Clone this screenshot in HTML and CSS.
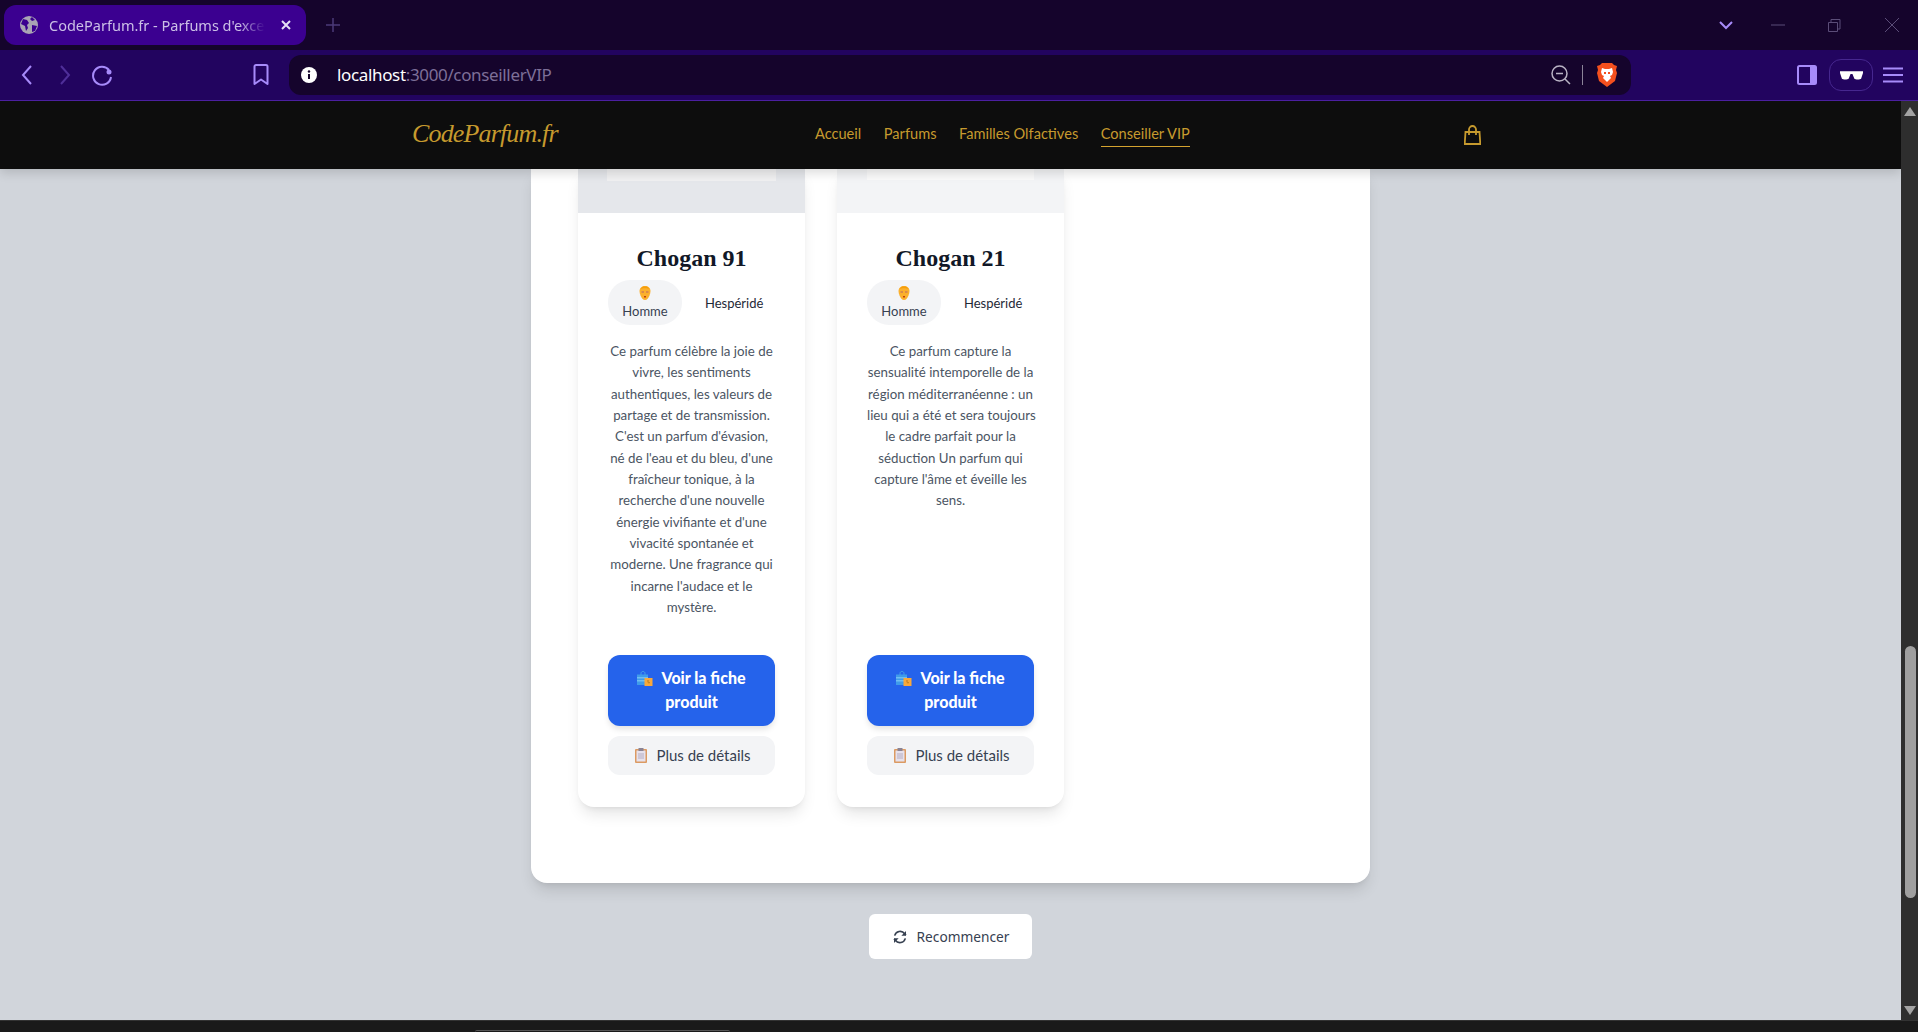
FILE: index.html
```html
<!DOCTYPE html>
<html lang="fr">
<head>
<meta charset="utf-8">
<title>CodeParfum.fr - Parfums d'exception</title>
<link rel="stylesheet" href="styles.css">
</head>
<body>
<svg class="defs" width="0" height="0" aria-hidden="true">
  <symbol id="e-face" viewBox="0 0 12 14">
    <path d="M.5 5c0-3 2.500-5 5.500-5s5.500 2 5.500 5c0 1.500-.5 3-1 4.500C9.500 12 8 14 6 14s-3.500-2-4.500-4.500C1 8 .5 6.500.5 5z" fill="#fbb02d"/>
    <path d="M1.500 3C2.500 1 4 .5 6 .5S9.500 1 10.500 3C9 2 3 2 1.500 3z" fill="#f59e0b"/>
    <rect x="2.500" y="5" width="2.500" height="2" fill="#d98a4a"/><rect x="7" y="5" width="2.500" height="2" fill="#d98a4a"/>
    <rect x="5" y="10" width="2" height="1.500" fill="#c2410c"/>
  </symbol>
  <symbol id="e-bags" viewBox="0 0 16 15">
    <path d="M4 4V2.500C4 1 5 .5 6 .5S8 1 8 2.500V4" fill="none" stroke="#4aa3e8"/>
    <rect x="0" y="3.500" width="11" height="10.500" fill="#3f9bea"/>
    <rect x="0" y="6" width="11" height="1.500" fill="#6fbdf2"/><rect x="0" y="9" width="11" height="1.500" fill="#6fbdf2"/>
    <rect x="7.500" y="7" width="8" height="8" fill="#f9a83a"/>
    <path d="M11 9v2c0 1 1 1 2 .5" fill="none" stroke="#b9791e"/>
  </symbol>
  <symbol id="e-clip" viewBox="0 0 12 15">
    <rect x="0" y="1" width="12" height="14" rx="1" fill="#dc9a62"/>
    <rect x="1.500" y="2.500" width="9" height="11" fill="#e6e1ec"/>
    <rect x="3.500" y="0" width="5" height="3" fill="#8b8494"/>
    <path d="M3 6h6M3 8h6M3 10h6" stroke="#b5adc2"/>
  </symbol>
</svg>
<div class="browser">
  <div class="tabstrip">
    <div class="tab">
      <svg class="tab-fav" viewBox="0 0 18 18"><circle cx="9" cy="9" r="9" fill="#a9a4b4"/><path d="M3 3l4 1 2 3-2 2 1 3-2 3-1-5-4-2zM12 1l3 3-3 1-2-2zM12 9l5 1-2 5-3 1z" fill="#3b0090"/></svg>
      <span class="tab-title">CodeParfum.fr - Parfums d'exception</span>
      <svg class="tab-close" viewBox="0 0 12 12"><path d="M2 2l8 8M10 2l-8 8" stroke="#e6def5" stroke-width="2"/></svg>
    </div>
    <svg class="tab-new" viewBox="0 0 14 14"><path d="M7 0v14M0 7h14" stroke="#4b3a78" stroke-width="1.500"/></svg>
    <svg class="tab-list" viewBox="0 0 14 10"><path d="M1 2l6 6 6-6" fill="none" stroke="#a78bfa" stroke-width="2"/></svg>
    <svg class="win win-min" viewBox="0 0 14 14"><path d="M0 7h14" stroke="#5b4d78"/></svg>
    <svg class="win" viewBox="0 0 14 14"><path d="M1.500 4.500h9v9h-9zM4 4V1.500h9V11h-2" fill="none" stroke="#5b4d78"/></svg>
    <svg class="win" viewBox="0 0 14 14"><path d="M0 0l14 14M14 0L0 14" stroke="#5b4d78"/></svg>
  </div>
  <div class="toolbar">
    <svg class="tool tool-back" viewBox="0 0 12 20"><path d="M10 1L2 10l8 9" fill="none" stroke="#a78bfa" stroke-width="2"/></svg>
    <svg class="tool tool-fwd" viewBox="0 0 12 20"><path d="M2 1l8 9-8 9" fill="none" stroke="#4f2f99" stroke-width="2"/></svg>
    <svg class="tool-reload" viewBox="0 0 22 22"><path d="M18 6A9 9 0 1 0 20 13" fill="none" stroke="#a78bfa" stroke-width="2"/><circle cx="18" cy="8" r="2.500" fill="#a78bfa"/></svg>
    <svg class="tool-mark" viewBox="0 0 16 22"><path d="M1.500 2.500a1.500 1.500 0 0 1 1.500-1.500h10a1.500 1.500 0 0 1 1.500 1.500V20L8 15.500 1.500 20z" fill="none" stroke="#a78bfa" stroke-width="2" stroke-linejoin="round"/></svg>
    <div class="omnibox">
      <svg class="info" viewBox="0 0 16 16"><circle cx="8" cy="8" r="8" fill="#fff"/><path d="M8 7v5" stroke="#15042c" stroke-width="2"/><circle cx="8" cy="4.500" r="1.200" fill="#15042c"/></svg>
      <span class="url"><span class="url-host">localhost</span>:3000/conseillerVIP</span>
      <svg class="zoom-ic" viewBox="0 0 20 20"><circle cx="8.500" cy="8.500" r="7.500" fill="none" stroke="#b9b3c4" stroke-width="1.500"/><path d="M5 8.500h7" stroke="#b9b3c4" stroke-width="1.500"/><path d="M14 14l5 5" stroke="#b9b3c4" stroke-width="1.500"/></svg>
      <span class="omni-sep"></span>
      <svg class="brave" viewBox="0 0 20 24"><path d="M5 0h10l2 2 3 1-1 4 1 3-2 8-8 6-8-6-2-8 1-3-1-4 3-1z" fill="#f4501e"/><path d="M5 5l3 1h4l3-1 1 4-1 3-2 1 1 2-4 4-4-4 1-2-2-1-1-3z" fill="#fff"/><path d="M7 9h2v2H7zM11 9h2v2h-2z" fill="#f4501e"/></svg>
    </div>
    <svg class="side-ic" viewBox="0 0 20 20"><rect x="1" y="1" width="18" height="18" rx="1.500" fill="none" stroke="#a78bfa" stroke-width="2"/><rect x="13" y="1" width="6" height="18" fill="#a78bfa"/></svg>
    <div class="shades"><svg viewBox="0 0 24 10"><path d="M0 1h24v2l-2 6c-1 1-6 1-7 0l-2-5h-2L9 9c-1 1-6 1-7 0L0 3z" fill="#fff"/></svg></div>
    <svg class="menu-ic" viewBox="0 0 20 16"><path d="M0 1.500h20M0 8h20M0 14.500h20" stroke="#a78bfa" stroke-width="2"/></svg>
  </div>
  <div class="viewport">
    <div class="page">
      <header class="site-nav">
        <div class="site-nav-inner">
          <a class="logo">CodeParfum.fr</a>
          <nav class="links">
            <a class="link">Accueil</a>
            <a class="link">Parfums</a>
            <a class="link">Familles Olfactives</a>
            <a class="link link-active">Conseiller VIP</a>
          </nav>
          <svg class="bag" viewBox="0 0 17 20"><path d="M1.500 7h14l.8 12H.700z" fill="none" stroke="#c69a2e" stroke-width="1.800"/><path d="M5 10V4.500a3.500 3.500 0 0 1 7 0V10" fill="none" stroke="#c69a2e" stroke-width="1.800"/></svg>
        </div>
      </header>
      <main class="content">
        <section class="panel">
          <div class="cards">
            <article class="card">
              <div class="card-img card-img-a"><div class="card-img-inner card-img-inner-a"></div></div>
              <div class="card-body">
                <h3 class="card-title">Chogan 91</h3>
                <div class="tags">
                  <span class="pill"><svg class="e-face"><use href="#e-face"/></svg>Homme</span>
                  <span class="family">Hespéridé</span>
                </div>
                <p class="desc">Ce parfum célèbre la joie de<br>vivre, les sentiments<br>authentiques, les valeurs de<br>partage et de transmission.<br>C'est un parfum d'évasion,<br>né de l'eau et du bleu, d'une<br>fraîcheur tonique, à la<br>recherche d'une nouvelle<br>énergie vivifiante et d'une<br>vivacité spontanée et<br>moderne. Une fragrance qui<br>incarne l'audace et le<br>mystère.</p>
                <a class="btn-primary"><svg class="e-bags"><use href="#e-bags"/></svg>Voir la fiche<br>produit</a>
                <a class="btn-soft"><svg class="e-clip"><use href="#e-clip"/></svg>Plus de détails</a>
              </div>
            </article>
            <article class="card">
              <div class="card-img card-img-b"><div class="card-img-inner card-img-inner-b"></div></div>
              <div class="card-body">
                <h3 class="card-title">Chogan 21</h3>
                <div class="tags">
                  <span class="pill"><svg class="e-face"><use href="#e-face"/></svg>Homme</span>
                  <span class="family">Hespéridé</span>
                </div>
                <p class="desc">Ce parfum capture la<br>sensualité intemporelle de la<br>région méditerranéenne : un<br>lieu qui a été et sera toujours<br>le cadre parfait pour la<br>séduction Un parfum qui<br>capture l'âme et éveille les<br>sens.</p>
                <a class="btn-primary"><svg class="e-bags"><use href="#e-bags"/></svg>Voir la fiche<br>produit</a>
                <a class="btn-soft"><svg class="e-clip"><use href="#e-clip"/></svg>Plus de détails</a>
              </div>
            </article>
          </div>
        </section>
        <a class="restart">
          <svg class="restart-ic" viewBox="0 0 24 24"><path d="M4 10a8.500 8.500 0 0 1 15-3l2 2M20 14a8.500 8.500 0 0 1-15 3l-2-2" fill="none" stroke="#374151" stroke-width="2.400"/><path d="M21 3v7h-7zM3 21v-7h7z" fill="#374151"/></svg>
          Recommencer
        </a>
      </main>
    </div>
    <div class="scrollbar">
      <span class="sb-up"></span>
      <span class="sb-thumb"></span>
      <span class="sb-down"></span>
    </div>
  </div>
  <div class="statusbar"><span class="status-tab"></span></div>
</div>
</body>
</html>
```

FILE: styles.css
```css
* { box-sizing: border-box; }
html, body { margin: 0; height: 100%; overflow: hidden; }
body { font-family: "Lato", "Liberation Sans", sans-serif; background: #1a1a1a; }
a { color: inherit; text-decoration: none; }
.defs { display: block; height: 0; }

.browser { display: flex; flex-direction: column; height: 1032px; }

/* tab strip */
.tabstrip { height: 50px; background: #15042c; display: flex; align-items: center; padding-left: 4px; flex: none; }
.tab { width: 302px; height: 40px; background: #3b0090; border-radius: 12px; display: flex; align-items: center; padding-left: 16px; }
.tab-fav { width: 18px; height: 18px; flex: none; }
.tab-title { width: 216px; margin-left: 11px; font: 14.500px "Noto Sans", sans-serif; color: #cbbfe6; white-space: nowrap; overflow: hidden; -webkit-mask-image: linear-gradient(90deg, #000 88%, transparent); mask-image: linear-gradient(90deg, #000 88%, transparent); }
.tab-close { width: 12px; height: 12px; margin-left: 15px; }
.tab-new { width: 14px; height: 14px; margin-left: 20px; }
.tab-list { width: 14px; height: 10px; margin-left: 1379px; }
.win { width: 14px; height: 14px; margin-left: 42px; }
.win-min { margin-left: 38px; }
.tabstrip .win:last-child { margin-left: 44px; }

/* toolbar */
.toolbar { height: 51px; background: #22045f; border-bottom: 1px solid #4b1fa0; display: flex; align-items: center; padding: 0 0 1px 21px; flex: none; }
.tool { width: 12px; height: 20px; }
.tool-fwd { margin-left: 26px; }
.tool-reload { width: 22px; height: 22px; margin-left: 20px; }
.tool-mark { width: 16px; height: 22px; margin-left: 140px; }
.omnibox { width: 1342px; height: 40px; margin-left: 20px; background: #15042c; border-radius: 12px; display: flex; align-items: center; padding-left: 12px; }
.info { width: 16px; height: 16px; }
.url { margin-left: 20px; font: 17px "Noto Sans", sans-serif; color: #7d6f98; letter-spacing: -.35px; }
.url-host { color: #fff; }
.zoom-ic { width: 20px; height: 20px; margin-left: auto; }
.omni-sep { width: 1px; height: 20px; background: #8b8498; margin-left: 11px; }
.brave { width: 20px; height: 24px; margin-left: 14px; margin-right: 14px; }
.side-ic { width: 20px; height: 20px; margin-left: 166px; }
.shades { width: 44px; height: 32px; margin-left: 12px; border: 1px solid #46278f; border-radius: 12px; display: flex; align-items: center; justify-content: center; }
.shades svg { width: 23px; height: 10px; }
.menu-ic { width: 20px; height: 16px; margin-left: 10px; }

/* page */
.viewport { flex: 1; display: flex; min-height: 0; }
.page { flex: 1; min-width: 0; display: flex; flex-direction: column; background: #d1d5db; overflow: hidden; }
.site-nav { height: 68px; background: #0d0d0d; flex: none; position: relative; z-index: 2; box-shadow: 0 4px 10px rgba(0,0,0,.14); }
.site-nav-inner { width: 1069px; height: 100%; margin-left: 412px; display: flex; align-items: center; }
.logo { width: 148px; margin-bottom: 2px; font: italic 26px "Liberation Serif", serif; color: #c69a2e; letter-spacing: -.85px; white-space: nowrap; }
.links { margin-left: 255px; margin-bottom: 3px; display: flex; gap: 22.500px; }
.link { font-size: 14.600px; color: #c69a2e; padding: 4px 0; border-bottom: 1px solid transparent; white-space: nowrap; }
.link-active { border-bottom-color: #d4a32f; }
.bag { width: 17px; height: 20px; margin-left: auto; }

.content { flex: 1; display: flex; flex-direction: column; align-items: center; }
.panel { width: 839px; background: #fff; border-radius: 0 0 16px 16px; padding: 0 47px 76px; box-shadow: 0 10px 15px -3px rgba(0,0,0,.12), 0 4px 6px -4px rgba(0,0,0,.1); }
.cards { display: grid; grid-template-columns: repeat(3, 227px); gap: 32px; }
.card { background: #fff; border-radius: 0 0 16px 16px; box-shadow: 0 10px 15px -3px rgba(0,0,0,.1), 0 4px 6px -4px rgba(0,0,0,.1); display: flex; flex-direction: column; }
.card-img { height: 44px; flex: none; }
.card-img-a { background: #e5e7eb; }
.card-img-b { background: #f3f4f6; }
.card-img-inner { height: 12px; margin: 0 29px 0 29px; }
.card-img-inner-a { background: #f0f0f1; }
.card-img-inner-b { background: #fafafa; margin: 0 30px; height: 11px; }
.card-body { flex: 1; padding: 29px 30px 32px; display: flex; flex-direction: column; align-items: stretch; text-align: center; }
.card-title { margin: 0; font: 700 24px/32px "Liberation Serif", serif; color: #111827; }
.tags { display: flex; align-items: center; margin-top: 6px; gap: 23px; }
.pill { width: 74px; height: 45px; border-radius: 22px; background: #f3f4f6; display: flex; flex-direction: column; align-items: center; padding-top: 6px; font-size: 13px; line-height: 18px; color: #374151; }
.e-face { width: 12px; height: 14px; margin-bottom: 2px; flex: none; }
.family { font-size: 13px; color: #1f2937; }
.desc { margin: 16px 0 37px; font-size: 13.300px; line-height: 21.330px; color: #4b5563; white-space: nowrap; }
.btn-primary { margin-top: auto; height: 71px; border-radius: 12px; background: #2563eb; color: #fff; font-size: 16px; font-weight: 900; line-height: 24px; padding-top: 11px; box-shadow: 0 4px 6px -1px rgba(0,0,0,.12); }
.e-bags { width: 16px; height: 15px; margin-right: 8px; vertical-align: -2px; }
.btn-soft { margin-top: 10px; height: 39px; padding-left: 3px; border-radius: 12px; background: #f3f4f6; color: #374151; font-size: 15px; line-height: 39px; }
.e-clip { width: 12px; height: 15px; margin-right: 9px; vertical-align: -2px; }

.restart { margin-top: 31px; width: 163px; height: 45px; border-radius: 6px; background: #fff; display: flex; align-items: center; justify-content: center; gap: 9px; font: 13.700px "Noto Sans", sans-serif; color: #374151; flex: none; }
.restart-ic { width: 16px; height: 16px; }

.scrollbar { width: 17px; background: #2e2e2e; flex: none; display: flex; flex-direction: column; align-items: center; padding: 6px 0 5px 1px; }
.sb-up { width: 0; height: 0; border: 6px solid transparent; border-top: 0; border-bottom: 9px solid #a3a3a3; }
.sb-down { width: 0; height: 0; border: 6px solid transparent; border-bottom: 0; border-top: 9px solid #a3a3a3; margin-top: auto; }
.sb-thumb { width: 11px; height: 252px; margin-top: 530px; background: #9f9f9f; border-radius: 6px; }

.statusbar { height: 12px; background: #1a1a1a; border-top: 1px solid #333; padding: 9px 0 0 475px; flex: none; }
.status-tab { display: block; width: 255px; height: 2px; border-top: 1px solid #555; border-radius: 4px 4px 0 0; }
```
